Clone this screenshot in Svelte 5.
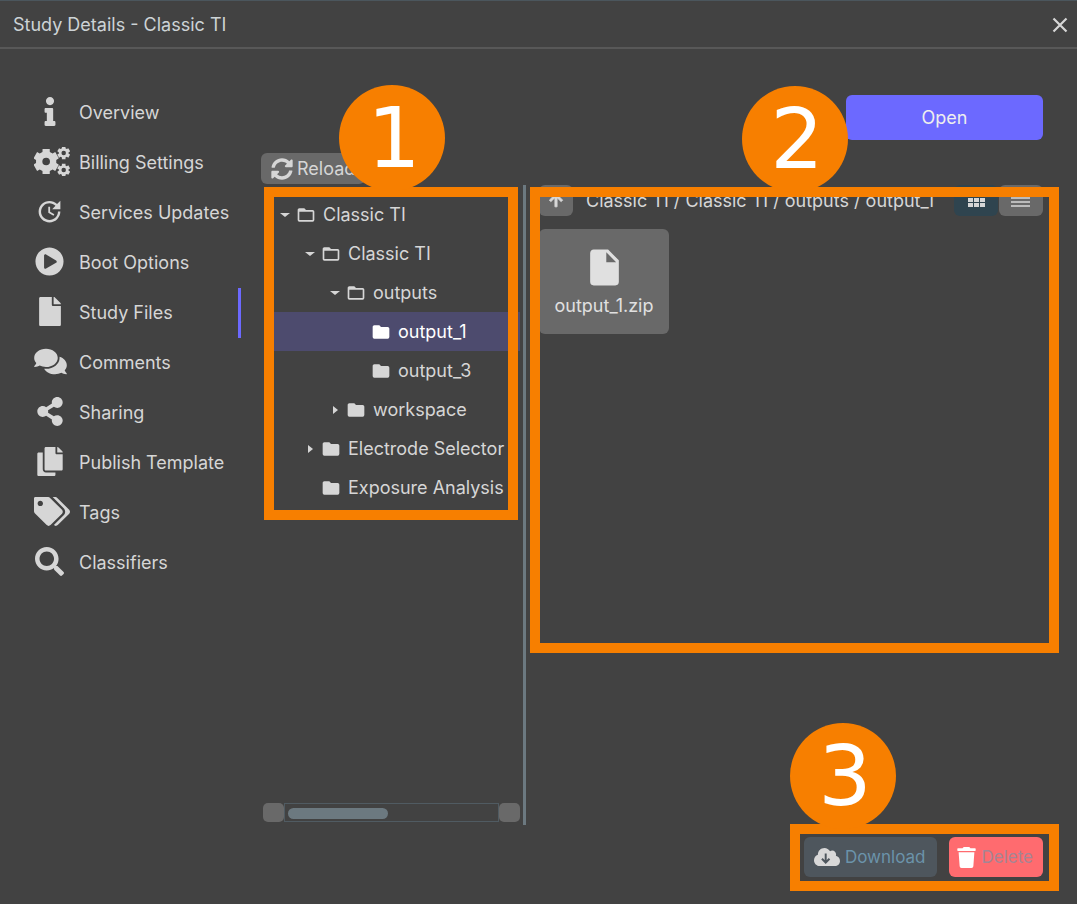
<script>
  // Outline of a gear wheel with its centre hole, for the settings icon.
  function gear(cx, cy, outer, inner, hole) {
    const point = (radius, degrees) => {
      const angle = (degrees * Math.PI) / 180;
      return `${(cx + radius * Math.cos(angle)).toFixed(1)} ${(cy + radius * Math.sin(angle)).toFixed(1)}`;
    };
    const points = [];
    for (let i = 0; i < 6; i++) {
      const a = 30 + i * 60;
      points.push(point(inner, a - 21), point(outer, a - 16), point(outer, a + 16), point(inner, a + 21));
    }
    return `M${points.join('L')}ZM${cx - hole} ${cy}a${hole} ${hole} 0 1 0 ${hole * 2} 0a${hole} ${hole} 0 1 0 ${-hole * 2} 0Z`;
  }

  const fileIcon = 'M224 136V0H24C10.7 0 0 10.7 0 24v464c0 13.3 10.7 24 24 24h336c13.3 0 24-10.7 24-24V160H248c-13.2 0-24-10.8-24-24zm160-14.1v6.1H256V0h6.1c6.4 0 12.5 2.5 17 7l97.9 98c4.5 4.5 7 10.6 7 16.9z';

  const sections = [
    { label: 'Overview', box: '0 0 192 512', width: 12, height: 29, d: 'M20 424.229h20V279.771H20c-11.046 0-20-8.954-20-20V212c0-11.046 8.954-20 20-20h112c11.046 0 20 8.954 20 20v212.229h20c11.046 0 20 8.954 20 20V492c0 11.046-8.954 20-20 20H20c-11.046 0-20-8.954-20-20v-47.771c0-11.046 8.954-20 20-20zM96 0C56.235 0 24 32.235 24 72s32.235 72 72 72 72-32.235 72-72S135.764 0 96 0z' },
    { label: 'Billing Settings', box: '0 0 640 512', width: 36, height: 29, wide: true, d: gear(216, 256, 232, 182, 68) + gear(528, 104, 118, 88, 40) + gear(528, 408, 118, 88, 40) },
    { label: 'Services Updates', box: '0 0 24 24', width: 29, height: 29, d: 'M21,10.12H14.22L16.96,7.3C14.23,4.6 9.81,4.5 7.08,7.2C4.35,9.91 4.35,14.28 7.08,17C9.81,19.7 14.23,19.7 16.96,17C18.32,15.65 19,14.08 19,12.1H21C21,14.08 20.12,16.65 18.36,18.39C14.85,21.87 9.15,21.87 5.64,18.39C2.14,14.92 2.11,9.28 5.62,5.81C9.13,2.34 14.76,2.34 18.27,5.81L21,3V10.12M12.5,8V12.25L16,14.33L15.28,15.54L11,13V8H12.5Z' },
    { label: 'Boot Options', box: '0 0 512 512', width: 29, height: 29, d: 'M256 8C119 8 8 119 8 256s111 248 248 248 248-111 248-248S393 8 256 8zm115.700 272l-176 101c-15.800 8.800-35.700-2.500-35.700-21V152c0-18.400 19.800-29.800 35.700-21l176 107c16.400 9.200 16.400 32.900 0 42z' },
    { label: 'Study Files', box: '0 0 384 512', width: 22, height: 29, active: true, d: fileIcon },
    { label: 'Comments', box: '0 0 576 512', width: 33, height: 29, wide: true, d: 'M416 192c0-88.4-93.1-160-208-160S0 103.600 0 192c0 34.300 14.100 65.900 38 92-13.400 30.200-35.500 54.200-35.800 54.500-2.200 2.300-2.800 5.700-1.500 8.700S4.800 352 8 352c36.600 0 66.900-12.300 88.700-25 32.200 15.700 70.300 25 111.300 25 114.900 0 208-71.600 208-160zm122 220c23.900-26 38-57.700 38-92 0-66.900-53.500-124.200-129.300-148.100.9 6.600 1.300 13.300 1.300 20.100 0 105.900-107.700 192-240 192-10.800 0-21.300-.8-31.700-1.900C207.800 439.600 281.800 480 368 480c41 0 79.100-9.200 111.300-25 21.800 12.700 52.100 25 88.700 25 3.200 0 6.100-1.900 7.300-4.800 1.300-2.900.7-6.300-1.500-8.700-.3-.3-22.400-24.200-35.800-54.500z' },
    { label: 'Sharing', box: '0 0 448 512', width: 26, height: 29, d: 'M352 320c-22.608 0-43.387 7.819-59.79 20.895l-102.486-64.054a96.551 96.551 0 0 0 0-41.683l102.486-64.054C308.613 184.181 329.392 192 352 192c53.019 0 96-42.981 96-96S405.019 0 352 0s-96 42.981-96 96c0 7.158.79 14.130 2.276 20.841L155.790 180.895C139.387 167.819 118.608 160 96 160c-53.019 0-96 42.981-96 96s42.981 96 96 96c22.608 0 43.387-7.819 59.790-20.895l102.486 64.054A96.301 96.301 0 0 0 256 416c0 53.019 42.981 96 96 96s96-42.981 96-96-42.981-96-96-96z' },
    { label: 'Publish Template', box: '0 0 448 512', width: 26, height: 29, d: 'M320 448v40c0 13.255-10.745 24-24 24H24c-13.255 0-24-10.745-24-24V120c0-13.255 10.745-24 24-24h72v296c0 30.879 25.121 56 56 56h168zm0-344V0H152c-13.255 0-24 10.745-24 24v368c0 13.255 10.745 24 24 24h272c13.255 0 24-10.745 24-24V128H344c-13.200 0-24-10.800-24-24zm120.971-31.029L375.029 7.029A24 24 0 0 0 358.059 0H352v96h96v-6.059a24 24 0 0 0-7.029-16.970z' },
    { label: 'Tags', box: '0 0 640 512', width: 36, height: 29, wide: true, d: 'M497.941 225.941L286.059 14.059A48 48 0 0 0 252.118 0H24C10.700 0 0 10.700 0 24v228.118a48 48 0 0 0 14.059 33.941l211.882 211.882c18.744 18.745 49.136 18.746 67.882 0l204.118-204.118c18.745-18.745 18.745-49.137 0-67.882zM112 160c-26.510 0-48-21.490-48-48s21.490-48 48-48 48 21.490 48 48-21.490 48-48 48zm513.941 133.823L421.823 497.941c-18.745 18.745-49.137 18.745-67.882 0l-.36-.36L527.640 323.522c16.999-16.999 26.360-39.600 26.360-63.640s-9.362-46.641-26.360-63.640L331.397 0h48.721a48 48 0 0 1 33.941 14.059l211.882 211.882c18.745 18.745 18.745 49.137 0 67.882z' },
    { label: 'Classifiers', box: '0 0 512 512', width: 29, height: 29, d: 'M505 442.700L405.300 343c-4.500-4.500-10.600-7-17-7H372c27.600-35.300 44-79.700 44-128C416 93.100 322.900 0 208 0S0 93.100 0 208s93.100 208 208 208c48.300 0 92.700-16.400 128-44v16.300c0 6.400 2.500 12.500 7 17l99.700 99.700c9.400 9.400 24.600 9.400 33.900 0l28.300-28.300c9.400-9.400 9.400-24.600.1-34zM208 336c-70.700 0-128-57.200-128-128 0-70.700 57.200-128 128-128 70.700 0 128 57.200 128 128 0 70.700-57.200 128-128 128z' }
  ];

  const tree = [
    { label: 'Classic TI', depth: 0, arrow: 'down' },
    { label: 'Classic TI', depth: 1, arrow: 'down' },
    { label: 'outputs', depth: 2, arrow: 'down' },
    { label: 'output_1', depth: 3, selected: true },
    { label: 'output_3', depth: 3 },
    { label: 'workspace', depth: 2, arrow: 'right' },
    { label: 'Electrode Selector', depth: 1, arrow: 'right' },
    { label: 'Exposure Analysis', depth: 1 }
  ];

  const closedFolder = 'M10,4H4C2.89,4 2,4.89 2,6V18A2,2 0 0,0 4,20H20A2,2 0 0,0 22,18V8C22,6.89 21.1,6 20,6H12L10,4Z';
  const openFolder = 'M20,18H4V8H20M20,6H12L10,4H4C2.89,4 2,4.89 2,6V18A2,2 0 0,0 4,20H20A2,2 0 0,0 22,18V8C22,6.89 21.1,6 20,6Z';
</script>

<div class="window">
  <header>
    <h1>Study Details - Classic TI</h1>
    <button class="close" aria-label="Close">
      <svg width="16" height="16" viewBox="0 0 16 16"><path d="M1.500 1.500L14.500 14.500M14.500 1.500L1.500 14.500" fill="none" stroke="currentColor" stroke-width="2.200" /></svg>
    </button>
  </header>

  <div class="body">
    <nav>
      {#each sections as s}
        <button class="section" class:active={s.active}>
          <span class="icon" class:wide={s.wide}>
            <svg width={s.width} height={s.height} viewBox={s.box}><path d={s.d} fill="currentColor" fill-rule="evenodd" /></svg>
          </span>
          {s.label}
        </button>
      {/each}
    </nav>

    <main>
      <div class="top"><button class="open">Open</button></div>
      <div class="tools">
        <button class="reload">
          <svg width="22" height="22" viewBox="0 0 512 512"><path fill="currentColor" d="M370.720 133.280C339.458 104.008 298.888 87.962 255.848 88c-77.458.068-144.328 53.178-162.791 126.850-1.344 5.363-6.122 9.150-11.651 9.150H24.103c-7.498 0-13.194-6.807-11.807-14.176C33.933 94.924 134.813 8 256 8c66.448 0 126.791 26.136 171.315 68.685L463.030 40.970C478.149 25.851 504 36.559 504 57.941V192c0 13.255-10.745 24-24 24H345.941c-21.382 0-32.090-25.851-16.971-40.971l41.750-41.749zM32 296h134.059c21.382 0 32.090 25.851 16.971 40.971l-41.750 41.750c31.262 29.273 71.835 45.319 114.876 45.280 77.418-.07 144.315-53.144 162.787-126.849 1.344-5.363 6.122-9.150 11.651-9.150h57.304c7.498 0 13.194 6.807 11.807 14.176C478.067 417.076 377.187 504 256 504c-66.448 0-126.791-26.136-171.315-68.685L48.970 471.030C33.851 486.149 8 475.441 8 454.059V320c0-13.255 10.745-24 24-24z" /></svg>
          Reload
        </button>
      </div>

      <div class="split">
        <section class="left" aria-label="Folders">
          <div class="tree">
            {#each tree as n}
              <button class="node" class:selected={n.selected} style="padding-left: {15 + n.depth * 25}px">
                <span class="arrow">
                  {#if n.arrow === 'down'}
                    <svg width="12" height="10" viewBox="0 0 12 10"><path d="M1 3H11L6 7Z" fill="currentColor" /></svg>
                  {:else if n.arrow === 'right'}
                    <svg width="12" height="10" viewBox="0 0 12 10"><path d="M4 1V9L9 5Z" fill="currentColor" /></svg>
                  {/if}
                </span>
                <svg width="20" height="20" viewBox="0 0 24 24"><path d={n.arrow === 'down' ? openFolder : closedFolder} fill="currentColor" /></svg>
                <span class="name">{n.label}</span>
              </button>
            {/each}
            <div class="frame frame-tree"><span class="badge">1</span></div>
          </div>
          <div class="scroll">
            <button aria-label="Scroll left"></button>
            <div class="track"><div class="thumb"></div></div>
            <button aria-label="Scroll right"></button>
          </div>
        </section>

        <div class="splitter"></div>

        <section class="right" aria-label="Files">
          <div class="path">
            <button class="up" aria-label="Up one folder">
              <svg width="20" height="20" viewBox="0 0 24 24"><path d="M4 11l1.800 1.800L10.700 8V19h2.600V8l4.900 4.800L20 11l-8-8-8 8z" fill="currentColor" stroke="currentColor" /></svg>
            </button>
            <span class="crumbs">Classic TI / Classic TI / outputs / output_1</span>
            <button class="view on" aria-label="Grid view">
              <svg width="18" height="18" viewBox="0 0 18 18"><path fill="currentColor" d="M1 1h5v4H1zM7 1h5v4H7zM13 1h5v4h-5zM1 6h5v4H1zM7 6h5v4H7zM13 6h5v4h-5zM1 11h5v4H1zM7 11h5v4H7zM13 11h5v4h-5z" /></svg>
            </button>
            <button class="view" aria-label="List view">
              <svg width="20" height="18" viewBox="0 0 20 18"><path d="M0 2H19M0 6H19M0 10H19M0 14H19" stroke="currentColor" stroke-width="1.500" /></svg>
            </button>
          </div>
          <button class="file">
            <svg width="43" height="43" viewBox="0 0 24 24"><path d="M13,9V3.500L18.500,9M6,2C4.890,2 4,2.890 4,4V20A2,2 0 0,0 6,22H18A2,2 0 0,0 20,20V8L14,2H6Z" fill="currentColor" fill-rule="evenodd" /></svg>
            <span>output_1.zip</span>
          </button>
          <div class="frame frame-files"><span class="badge">2</span></div>
        </section>
      </div>

      <div class="actions">
        <button class="download">
          <svg width="26" height="20" viewBox="0 20 640 472"><path fill="currentColor" d="M537.600 226.600c4.100-10.700 6.400-22.400 6.400-34.600 0-53-43-96-96-96-19.700 0-38.100 6-53.300 16.200C367 64.200 315.300 32 256 32c-88.400 0-160 71.600-160 160 0 2.700.1 5.400.2 8.100C40.200 219.800 0 273.200 0 336c0 79.500 64.500 144 144 144h368c70.700 0 128-57.300 128-128 0-61.900-44-113.600-102.400-125.400z" /><path d="M288 170V385M195 300L288 392L381 300" fill="none" stroke="#4e565d" stroke-width="48" /></svg>
          Download
        </button>
        <button class="delete">
          <svg width="19" height="21" viewBox="0 0 448 512"><path fill="currentColor" d="M32 128H416L391 470a45 45 0 0 1-45 42H102a45 45 0 0 1-45-42ZM432 32H320l-14-22A24 24 0 0 0 286 0H162a24 24 0 0 0-20 10L128 32H16A16 16 0 0 0 0 48v32a16 16 0 0 0 16 16h416a16 16 0 0 0 16-16V48a16 16 0 0 0-16-16z" /></svg>
          Delete
        </button>
        <div class="frame frame-actions"><span class="badge">3</span></div>
      </div>
    </main>
  </div>
</div>

<style>
  :global(body) { background: #424242; }
  * { box-sizing: border-box; }
  .window {
    min-height: 100vh;
    display: flex;
    flex-direction: column;
    overflow: hidden;
    border-top: 1px solid #4b565d;
    background: #424242;
    color: #d6d6d6;
    font: 18px/24px Inter, sans-serif;
  }
  button {
    border: 0;
    padding: 0;
    background: none;
    color: inherit;
    font: inherit;
    cursor: pointer;
  }
  svg { display: block; flex: none; }
  header {
    display: flex;
    align-items: center;
    justify-content: space-between;
    height: 48px;
    padding: 1px 9px 0 13px;
    border-bottom: 2px solid #585858;
  }
  h1 { margin: 0; font-size: 18px; font-weight: 400; color: #cdd3d6; }
  .body { flex: 1; display: flex; }
  nav { width: 241px; flex: none; padding-top: 39px; }
  .section {
    display: flex;
    align-items: center;
    gap: 14px;
    width: 100%;
    height: 50px;
    padding-left: 34px;
    border-right: 3px solid transparent;
    white-space: nowrap;
  }
  .active { border-color: #6c69ff; }
  .icon { width: 31px; display: flex; flex: none; justify-content: center; padding-bottom: 3px; }
  .wide { justify-content: flex-start; }
  main {
    flex: 1;
    min-width: 0;
    display: flex;
    flex-direction: column;
    padding: 46px 34px 27px 20px;
  }
  .top { display: flex; justify-content: flex-end; }
  .open { width: 197px; height: 45px; border-radius: 6px; background: #6c69ff; color: #eee; }
  .tools { display: flex; padding: 13px 0 1px; }
  .reload {
    display: flex;
    align-items: center;
    gap: 4px;
    height: 31px;
    padding: 0 10px;
    border-radius: 6px;
    background: #696969;
  }
  .split { flex: 1; display: flex; }
  .left { width: 259px; flex: none; display: flex; flex-direction: column; justify-content: space-between; }
  .tree { position: relative; padding: 10px 0 0 3px; }
  .node {
    display: flex;
    align-items: center;
    width: 100%;
    height: 39px;
    overflow: hidden;
    white-space: nowrap;
  }
  .selected { background: #4d4b6e; color: #fff; }
  .arrow { width: 17px; flex: none; }
  .name { padding-left: 7px; }
  .scroll { display: flex; height: 19px; margin: 0 0 3px 2px; }
  .scroll button { width: 21px; border-radius: 5px; background: #696969; }
  .track { flex: 1; padding: 4px 3px; border: 1px solid #505b62; }
  .thumb { width: 100px; height: 11px; border-radius: 6px; background: #6c7980; }
  .splitter { width: 3px; flex: none; margin-left: 3px; background: #6c7980; }
  .right { position: relative; flex: 1; min-width: 0; padding-left: 13px; }
  .path { display: flex; align-items: center; height: 31px; }
  .up, .view { display: flex; align-items: center; justify-content: center; height: 31px; border-radius: 6px; background: #696969; }
  .up { width: 34px; flex: none; }
  .crumbs { flex: 1; padding-left: 13px; white-space: nowrap; }
  .view { width: 44px; flex: none; margin-left: 1px; }
  .on { background: #2f444f; }
  .file {
    display: flex;
    flex-direction: column;
    align-items: center;
    justify-content: center;
    gap: 5px;
    width: 130px;
    height: 105px;
    margin-top: 13px;
    border-radius: 6px;
    background: #696969;
    color: #e0e0e0;
  }
  .actions { position: relative; align-self: flex-end; display: flex; gap: 12px; margin-top: 12px; font-size: 17px; }
  .actions button { display: flex; align-items: center; gap: 5px; height: 40px; border-radius: 6px; white-space: nowrap; }
  .download { padding: 0 12px 0 10px; background: #4e565d; }
  .delete { padding: 0 10px 0 8px; background: #ff6b6f; }
  .download { color: #6b93aa; }
  .delete { color: #a58595; }
  .download svg { color: #d8d8d8; }
  .delete svg { color: #fff; }
  .frame { position: absolute; border: 10px solid #f77f00; pointer-events: none; }
  .frame-tree { top: 2px; left: 3px; right: 2px; bottom: -13px; }
  .frame-files { top: 2px; left: 4px; right: -16px; height: 466px; }
  .frame-actions { inset: -13px -16px -14px -14px; }
  .badge {
    position: absolute;
    display: flex;
    align-items: center;
    justify-content: center;
    width: 106px;
    height: 106px;
    padding-left: 4px;
    border-radius: 50%;
    background: #f77f00;
    color: #fff;
    font: 84px/106px "DejaVu Sans", sans-serif;
  }
  .frame-tree .badge { top: -112px; left: 65px; }
  .frame-files .badge { top: -111px; left: 202px; }
  .frame-actions .badge { top: -111px; left: -10px; }
</style>
